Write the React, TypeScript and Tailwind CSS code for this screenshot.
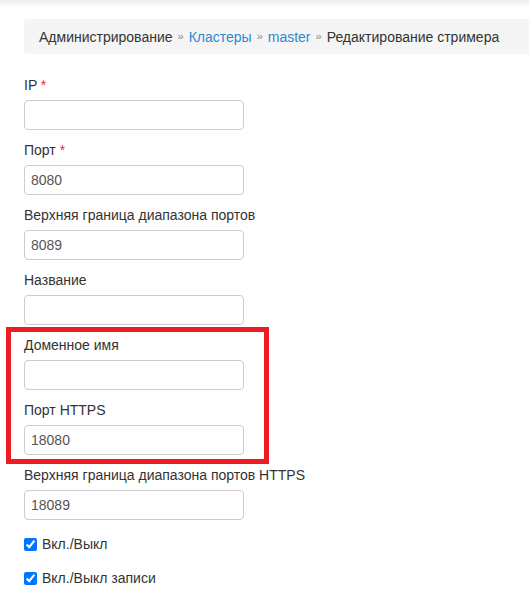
import React from "react";

const Sep = () => (
  <span className="inline-block px-[5px] text-[11px] leading-none text-[#8a8a8a]">»</span>
);

const inputCls =
  "block h-[30px] w-[220px] rounded-[4px] border border-[#cccccc] bg-white px-[6px] text-[14px] text-[#555] outline-none";

const Field = ({
  label,
  required,
  value,
  className = "mb-[10px]",
}: {
  label: string;
  required?: boolean;
  value?: string;
  className?: string;
}) => {
  return (
    <div className={className}>
      <label className="mb-[5px] block whitespace-nowrap">
        {label}
        {required && <span className="text-[#f0263d]"> *</span>}
      </label>
      <input defaultValue={value} className={inputCls} />
    </div>
  );
};

const Check = ({ label }: { label: string }) => {
  return (
    <label className="flex h-[20px] items-center gap-[5px]">
      <input type="checkbox" defaultChecked className="m-0 size-[13px] accent-[#0075ff]" />
      <span>{label}</span>
    </label>
  );
};

export default function App() {
  return (
    <div className="relative min-h-screen overflow-hidden bg-white font-['Liberation_Sans',Arial,sans-serif] text-[14px] leading-[20px] text-[#333]">
      <div className="h-[8px] bg-gradient-to-b from-[#ececec] to-white" />
      <div className="pl-6">
        <nav className="mt-[11px] mb-[21px] flex h-[35px] items-center whitespace-nowrap rounded-l-[4px] bg-[#f5f5f5] pl-[15px]">
          <span>Администрирование</span>
          <Sep />
          <a className="text-[#2a8ad4]">Кластеры</a>
          <Sep />
          <a className="text-[#2a8ad4]">master</a>
          <Sep />
          <span>Редактирование стримера</span>
        </nav>

        <form>
          <Field label="IP" required />
          <Field label="Порт" required value="8080" />
          <Field label="Верхняя граница диапазона портов" value="8089" />
          <Field label="Название" />
          <Field label="Доменное имя" />
          <Field label="Порт HTTPS" value="18080" />
          <Field
            label="Верхняя граница диапазона портов HTTPS"
            value="18089"
            className="mb-[14px]"
          />
          <div className="flex flex-col gap-[14px]">
            <Check label="Вкл./Выкл" />
            <Check label="Вкл./Выкл записи" />
          </div>
        </form>
      </div>

      <div className="pointer-events-none absolute top-[327px] left-[6px] h-[137px] w-[263px] border-[5px] border-[#ed1c24]" />
    </div>
  );
}
